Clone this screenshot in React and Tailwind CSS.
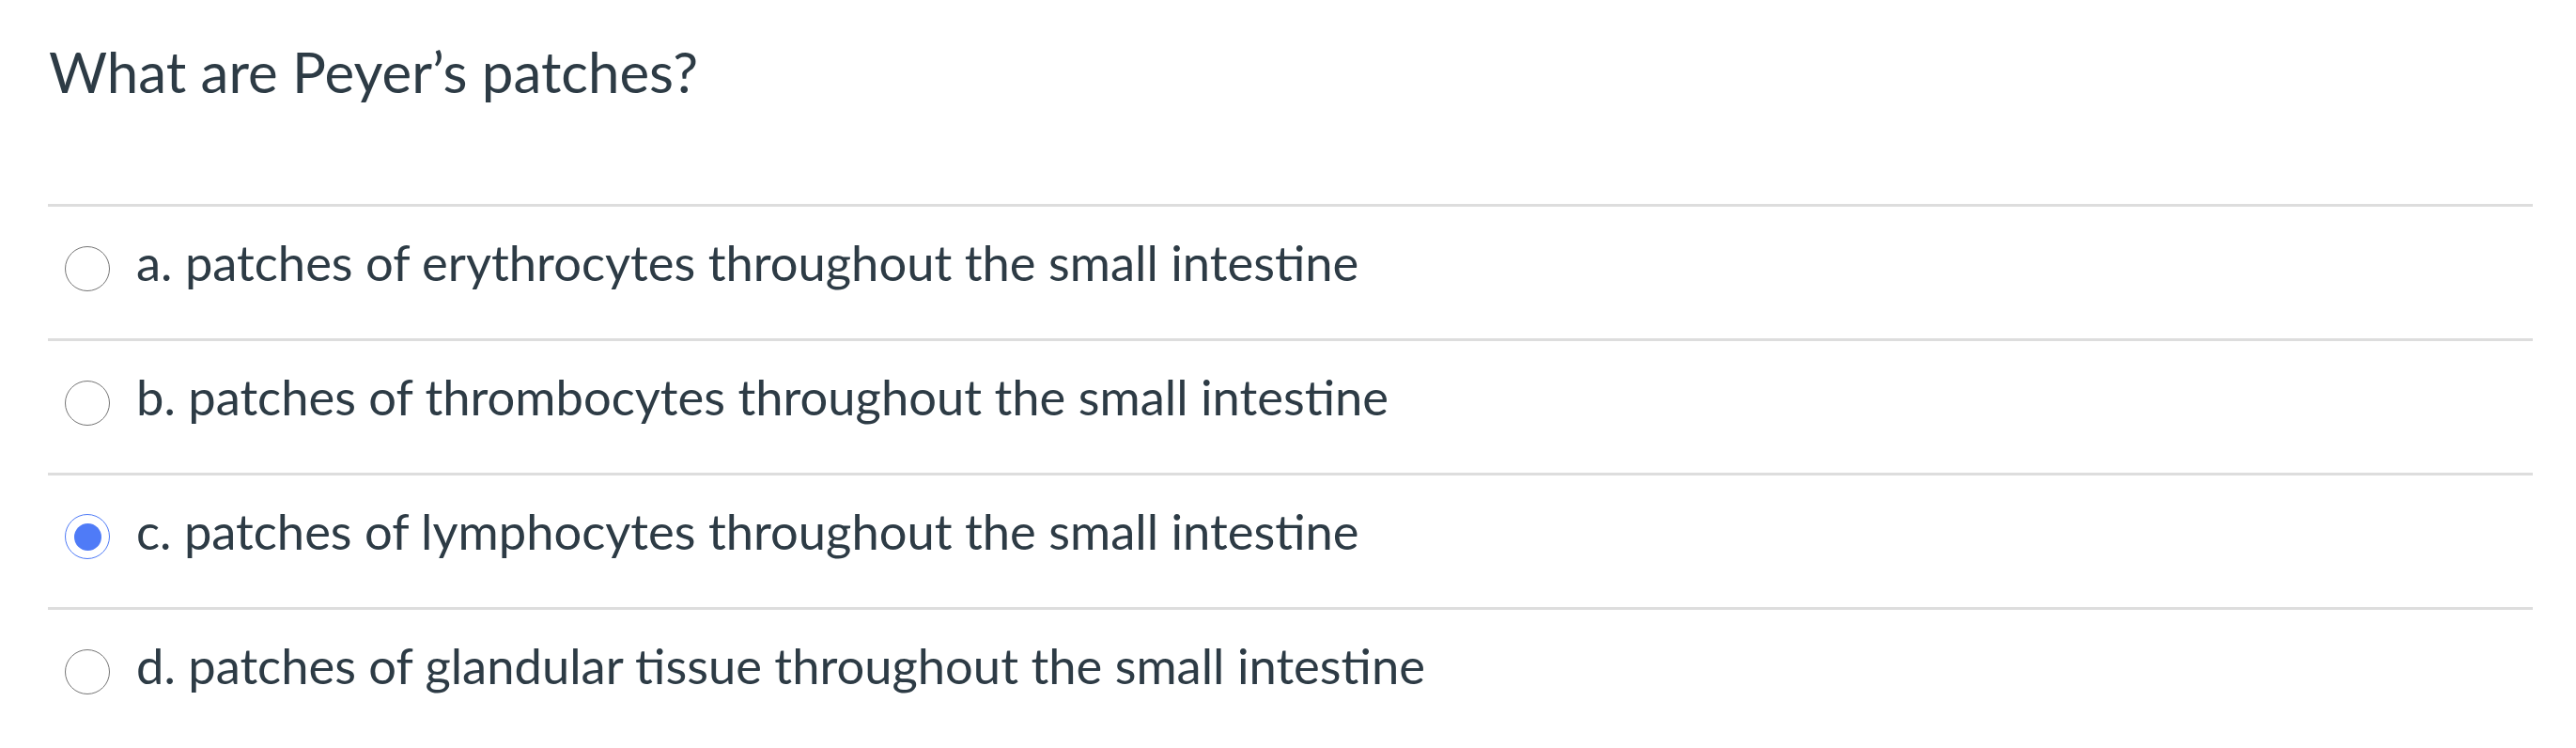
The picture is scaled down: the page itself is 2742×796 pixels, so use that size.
import React from "react";

const answers = [
  { label: "a. patches of erythrocytes throughout the small intestine", selected: false },
  { label: "b. patches of thrombocytes throughout the small intestine", selected: false },
  { label: "c. patches of lymphocytes throughout the small intestine", selected: true },
  { label: "d. patches of glandular tissue throughout the small intestine", selected: false },
];

function Radio({ selected }) {
  if (selected) {
    return (
      <div className="w-[48px] h-[48px] rounded-full border-[1.5px] border-[#4f7bf7] flex items-center justify-center shrink-0 mt-[41px]">
        <div className="w-[29px] h-[29px] rounded-full bg-[#4f7bf7]" />
      </div>
    );
  }
  return (
    <div className="w-[48px] h-[48px] rounded-full border-[1.5px] border-[#767676] bg-white shrink-0 mt-[42px]" />
  );
}

export default function App() {
  return (
    <div
      className="bg-white w-[2742px] h-[796px] text-[#2d3b45]"
      style={{ fontFamily: "Lato, 'Noto Sans', sans-serif" }}
    >
      <div className="ml-[51px] w-[2645px]">
        <h1 className="pt-[46px] pl-[1px] text-[60px] leading-none font-normal h-[217px]">
          What are Peyer’s patches?
        </h1>
        {answers.map((a) => (
          <div key={a.label} className="border-t-[3px] border-[#dddddd] h-[143px] flex items-start pl-[18px]">
            <Radio selected={a.selected} />
            <div className="ml-[28px] mt-[33px] text-[52.5px] leading-none">{a.label}</div>
          </div>
        ))}
      </div>
    </div>
  );
}
